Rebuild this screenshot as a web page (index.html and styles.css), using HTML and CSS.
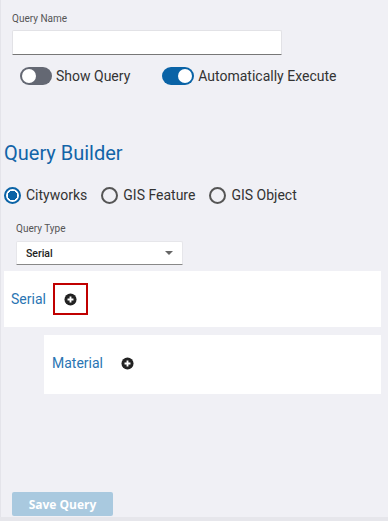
FILE: index.html
```html
<!DOCTYPE html>
<html lang="en">
<head>
  <meta charset="UTF-8">
  <meta name="viewport" content="width=device-width, initial-scale=1.0">
  <title>Query Builder</title>
  <link rel="stylesheet" href="styles.css">
</head>
<body>
  <div class="panel">
    <div class="field name-field">
      <label class="field-label">Query Name</label>
      <input type="text" class="text-input">
    </div>
    <div class="toggles">
      <label class="toggle"><span class="switch"></span> Show Query</label>
      <label class="toggle on"><span class="switch"></span> Automatically Execute</label>
    </div>

    <h2 class="builder-title">Query Builder</h2>
    <div class="radios">
      <label class="radio checked"><span class="dot"></span>Cityworks</label>
      <label class="radio"><span class="dot"></span>GIS Feature</label>
      <label class="radio"><span class="dot"></span>GIS Object</label>
    </div>

    <div class="field type-field">
      <label class="field-label">Query Type</label>
      <div class="select">
        <span>Serial</span>
        <span class="caret"></span>
      </div>
    </div>

    <div class="node">
      <span class="node-name">Serial</span>
      <span class="add-wrap selected">
        <svg class="add" viewBox="0 0 14 14" width="14" height="14">
          <circle cx="7" cy="7" r="6.5" fill="#222"/>
          <path d="M7 3.8v6.4M3.8 7h6.4" stroke="#fff" stroke-width="2"/>
        </svg>
      </span>
    </div>
    <div class="node child">
      <span class="node-name">Material</span>
      <span class="add-wrap">
        <svg class="add" viewBox="0 0 14 14" width="14" height="14">
          <circle cx="7" cy="7" r="6.5" fill="#222"/>
          <path d="M7 3.8v6.4M3.8 7h6.4" stroke="#fff" stroke-width="2"/>
        </svg>
      </span>
    </div>

    <div class="actions">
      <button class="save-btn" disabled>Save Query</button>
    </div>
  </div>
</body>
</html>
```

FILE: styles.css
```css
body {
  margin: 0;
  padding: 0;
  background: #e6e6eb;
  font-family: Roboto, "Liberation Sans", sans-serif;
}
.panel {
  height: 517px;
  box-sizing: border-box;
  background: #f0f0f5;
  border-left: 1px solid #e4e4ea;
  padding: 13px 7px 0 2px;
  display: flex;
  flex-direction: column;
}
.field-label {
  display: block;
  font-size: 10px;
  line-height: 12px;
  color: #555;
}
.name-field {
  padding-left: 9px;
}
.text-input {
  display: block;
  margin-top: 5px;
  width: 270px;
  height: 25px;
  box-sizing: border-box;
  border: 1px solid #e2e2e6;
  border-bottom: 1px solid #777;
  border-radius: 2px 2px 0 0;
  background: #fff;
}
.toggles {
  display: flex;
  margin-top: 12px;
  padding-left: 17px;
}
.toggle {
  display: flex;
  align-items: center;
  gap: 4px;
  font-size: 14px;
  color: #333;
  height: 18px;
}
.toggle + .toggle {
  margin-left: 32px;
}
.switch {
  position: relative;
  width: 32px;
  height: 18px;
  border-radius: 9px;
  background: #646873;
}
.switch::after {
  content: "";
  position: absolute;
  top: 2px;
  left: 2px;
  width: 14px;
  height: 14px;
  border-radius: 50%;
  background: #fff;
}
.toggle.on .switch {
  background: #0a63a6;
}
.toggle.on .switch::after {
  left: 16px;
}
.builder-title {
  margin: 56px 0 0 1px;
  font-size: 20px;
  line-height: 24px;
  font-weight: 400;
  color: #1264a8;
}
.radios {
  display: flex;
  margin-top: 21px;
  padding-left: 1px;
}
.radio {
  display: flex;
  align-items: center;
  gap: 5px;
  font-size: 14px;
  color: #333;
  height: 18px;
  margin-right: 14px;
}
.dot {
  width: 17px;
  height: 17px;
  box-sizing: border-box;
  border: 2px solid #555;
  border-radius: 50%;
}
.radio.checked .dot {
  border-color: #0a63a6;
  background: radial-gradient(circle, #0a63a6 0 4.5px, #fff 5px);
}
.type-field {
  margin-top: 19px;
  padding-left: 13px;
}
.select {
  margin-top: 6px;
  width: 167px;
  height: 24px;
  box-sizing: border-box;
  display: flex;
  align-items: center;
  justify-content: space-between;
  padding: 0 9px;
  background: #fff;
  border: 1px solid #e6e6ea;
  border-bottom: 1px solid #888;
  border-radius: 2px 2px 0 0;
  font-size: 10.5px;
  font-weight: 500;
  color: #222;
}
.caret {
  width: 0;
  height: 0;
  border-left: 4px solid transparent;
  border-right: 4px solid transparent;
  border-top: 4px solid #666;
}
.node {
  margin-top: 6px;
  margin-left: 1px;
  height: 56px;
  background: #fff;
  display: flex;
  align-items: center;
  padding-left: 7px;
  gap: 7px;
}
.node.child {
  margin-top: 8px;
  margin-left: 41px;
  padding-left: 8px;
  padding-bottom: 3px;
}
.node-name {
  font-size: 14px;
  color: #2a75b3;
}
.add-wrap {
  width: 35px;
  height: 32px;
  box-sizing: border-box;
  display: flex;
  align-items: center;
  justify-content: center;
  border: 2px solid transparent;
}
.add-wrap.selected {
  border-color: #c00000;
}
.add {
  display: block;
  width: 13px;
  height: 13px;
}
.actions {
  margin-top: auto;
  padding: 0 0 1px 9px;
}
.save-btn {
  width: 101px;
  height: 24px;
  border: none;
  border-radius: 2px;
  background: #a9c9df;
  color: #fff;
  font-family: "Open Sans", sans-serif;
  font-weight: 700;
  font-size: 12px;
}
```
